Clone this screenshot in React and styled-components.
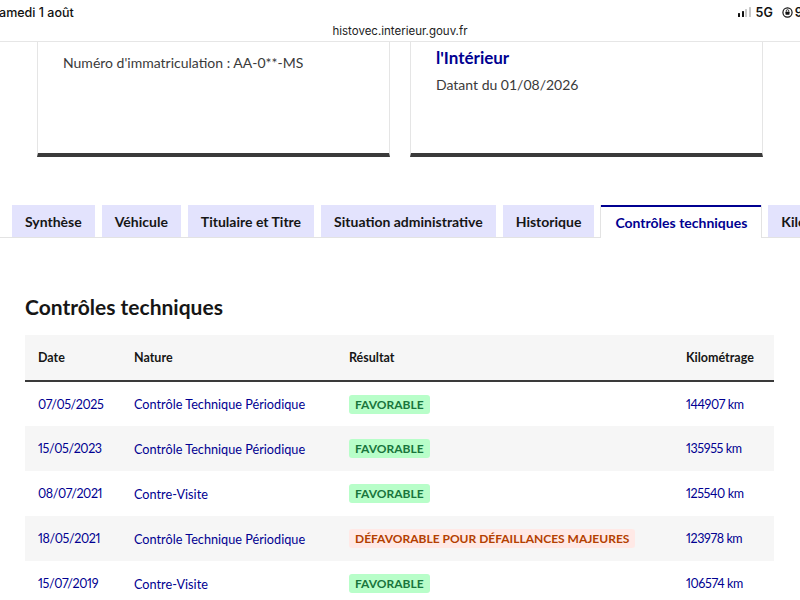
import React from "react";
import styled, { createGlobalStyle } from "styled-components";

const Global = createGlobalStyle`
  html, body { margin: 0; padding: 0; background: #fff; }
  body { font-family: Lato, "Open Sans", sans-serif; overflow: hidden; }
  * { box-sizing: border-box; }
`;

const Page = styled.div`
  width: 800px;
  height: 600px;
  overflow: hidden;
  background: #fff;
`;

const StatusBar = styled.div`
  height: 42px;
  border-bottom: 1px solid #e6e6e6;
  display: flex;
  flex-direction: column;
  font-family: Inter, Roboto, sans-serif;
  color: #111;
`;

const StatusTop = styled.div`
  height: 24px;
  display: flex;
  align-items: center;
  justify-content: space-between;
  font-size: 12.5px;
  font-weight: 500;
  white-space: nowrap;
`;

const DateText = styled.span`
  margin-left: -9px;
`;

const StatusRight = styled.div`
  display: flex;
  align-items: center;
  margin-right: -20px;
  font-weight: 600;
`;

const Bars = styled.div`
  display: flex;
  align-items: flex-end;
  gap: 1.5px;
  height: 9px;
  margin-right: 5px;
`;

const Bar = styled.span`
  width: 2px;
  height: ${(p) => p.h}px;
  border-radius: 0.5px;
  background: ${(p) => (p.on ? "#111" : "#c8c8c8")};
`;

const NetLabel = styled.span`
  margin-right: 9px;
`;

const Lock = styled.svg`
  margin-right: 2px;
`;

const Url = styled.div`
  text-align: center;
  font-size: 11.5px;
  color: #222;
  line-height: 14px;
`;

const CardsRow = styled.div`
  display: flex;
  gap: 20px;
  padding: 0 37px;
`;

const Card = styled.div`
  width: 353px;
  height: 115px;
  border-left: 1px solid #e5e5e5;
  border-right: 1px solid #e5e5e5;
  border-bottom: 4px solid #3a3a3a;
  padding: ${(p) => p.pad};
  color: #3a3a3a;
`;

const CardText = styled.div`
  font-size: 14px;
  line-height: 20px;
`;

const CardTitle = styled.div`
  font-size: 17px;
  font-weight: 700;
  color: #000091;
  line-height: 22px;
  margin-bottom: 6px;
`;

const Tabs = styled.div`
  margin-top: 48px;
  display: flex;
  gap: 7px;
  padding-left: 12px;
  white-space: nowrap;
  position: relative;
  z-index: 1;
  margin-bottom: -1px;
`;

const Tab = styled.div`
  flex: none;
  height: ${(p) => (p.active ? "33px" : "32px")};
  padding: ${(p) => (p.active ? "0 14px 1px" : "0 13px")};
  display: flex;
  align-items: center;
  font-size: 14px;
  font-weight: 700;
  color: ${(p) => (p.active ? "#000091" : "#161616")};
  background: ${(p) => (p.active ? "#fff" : "#e3e3fd")};
  border-top: ${(p) => (p.active ? "2px solid #000091" : "none")};
  box-shadow: ${(p) =>
    p.active ? "1px 0 0 #e3e3e3, -1px 0 0 #e3e3e3" : "none"};
  margin-bottom: ${(p) => (p.active ? "0" : "1px")};
`;

const Panel = styled.div`
  border-top: 1px solid #e3e3e3;
  padding: 54px 26px 0 25px;
  background: #fff;
`;

const Heading = styled.h2`
  margin: 0 0 13px;
  font-size: 21px;
  font-weight: 700;
  color: #161616;
  line-height: 30px;
`;

const Table = styled.table`
  width: 749px;
  border-collapse: collapse;
  table-layout: fixed;
  font-size: 13px;
`;

const Th = styled.th`
  height: 46px;
  text-align: left;
  font-size: 12.5px;
  font-weight: 700;
  color: #161616;
  background: #f6f6f6;
  border-bottom: 2px solid #3a3a3a;
  padding: 0 0 0 13px;
  width: ${(p) => p.w}px;
`;

const Tr = styled.tr`
  background: ${(p) => (p.alt ? "#f6f6f6" : "#fff")};
`;

const Td = styled.td`
  height: 45px;
  padding: 0 0 0 13px;
  color: #000091;
  vertical-align: middle;
  font-size: ${(p) => (p.num ? "12.5px" : "12.7px")};
  letter-spacing: ${(p) => (p.num ? "-0.4px" : "0")};
  font-variant-numeric: proportional-nums;
`;

const Badge = styled.span`
  display: inline-block;
  height: 19px;
  line-height: 19px;
  padding: 0 6px;
  border-radius: 3px;
  font-size: 12px;
  font-weight: 700;
  text-transform: uppercase;
  letter-spacing: 0;
  color: ${(p) => (p.ok ? "#18753c" : "#b34000")};
  background: ${(p) => (p.ok ? "#b8fec9" : "#ffe9e6")};
`;

const rows = [
  ["07/05/2025", "Contrôle Technique Périodique", "Favorable", true, "144907 km"],
  ["15/05/2023", "Contrôle Technique Périodique", "Favorable", true, "135955 km"],
  ["08/07/2021", "Contre-Visite", "Favorable", true, "125540 km"],
  ["18/05/2021", "Contrôle Technique Périodique", "Défavorable pour défaillances majeures", false, "123978 km"],
  ["15/07/2019", "Contre-Visite", "Favorable", true, "106574 km"],
];

const tabs = [
  "Synthèse",
  "Véhicule",
  "Titulaire et Titre",
  "Situation administrative",
  "Historique",
  "Contrôles techniques",
  "Kilométrage",
];

export default function App() {
  return (
    <Page>
      <Global />
      <StatusBar>
        <StatusTop>
          <DateText>Samedi 1 août</DateText>
          <StatusRight>
            <Bars>
              <Bar h={3.5} on />
              <Bar h={5.5} on />
              <Bar h={7.5} />
              <Bar h={9.5} />
            </Bars>
            <NetLabel>5G</NetLabel>
            <Lock width="11" height="11" viewBox="0 0 12 12">
              <circle cx="6" cy="6" r="5" fill="none" stroke="#111" strokeWidth="1.3" />
              <rect x="3.8" y="5.2" width="4.4" height="3.2" rx="0.5" fill="#111" />
              <path d="M4.6 5.3V4.3a1.4 1.4 0 0 1 2.8 0v1" fill="none" stroke="#111" strokeWidth="0.9" />
            </Lock>
            <span>9:41</span>
          </StatusRight>
        </StatusTop>
        <Url>histovec.interieur.gouv.fr</Url>
      </StatusBar>

      <CardsRow>
        <Card pad="11px 25px">
          <CardText>Numéro d'immatriculation : AA-0**-MS</CardText>
        </Card>
        <Card pad="5px 25px">
          <CardTitle>l'Intérieur</CardTitle>
          <CardText>Datant du 01/08/2026</CardText>
        </Card>
      </CardsRow>

      <Tabs>
        {tabs.map((t) => (
          <Tab key={t} active={t === "Contrôles techniques"}>
            {t}
          </Tab>
        ))}
      </Tabs>

      <Panel>
        <Heading>Contrôles techniques</Heading>
        <Table>
          <thead>
            <tr>
              <Th w={96}>Date</Th>
              <Th w={215}>Nature</Th>
              <Th w={337}>Résultat</Th>
              <Th w={101}>Kilométrage</Th>
            </tr>
          </thead>
          <tbody>
            {rows.map((r, i) => (
              <Tr key={i} alt={i % 2 === 1}>
                <Td num>{r[0]}</Td>
                <Td>{r[1]}</Td>
                <Td>
                  <Badge ok={r[3]}>{r[2]}</Badge>
                </Td>
                <Td num>{r[4]}</Td>
              </Tr>
            ))}
          </tbody>
        </Table>
      </Panel>
    </Page>
  );
}
